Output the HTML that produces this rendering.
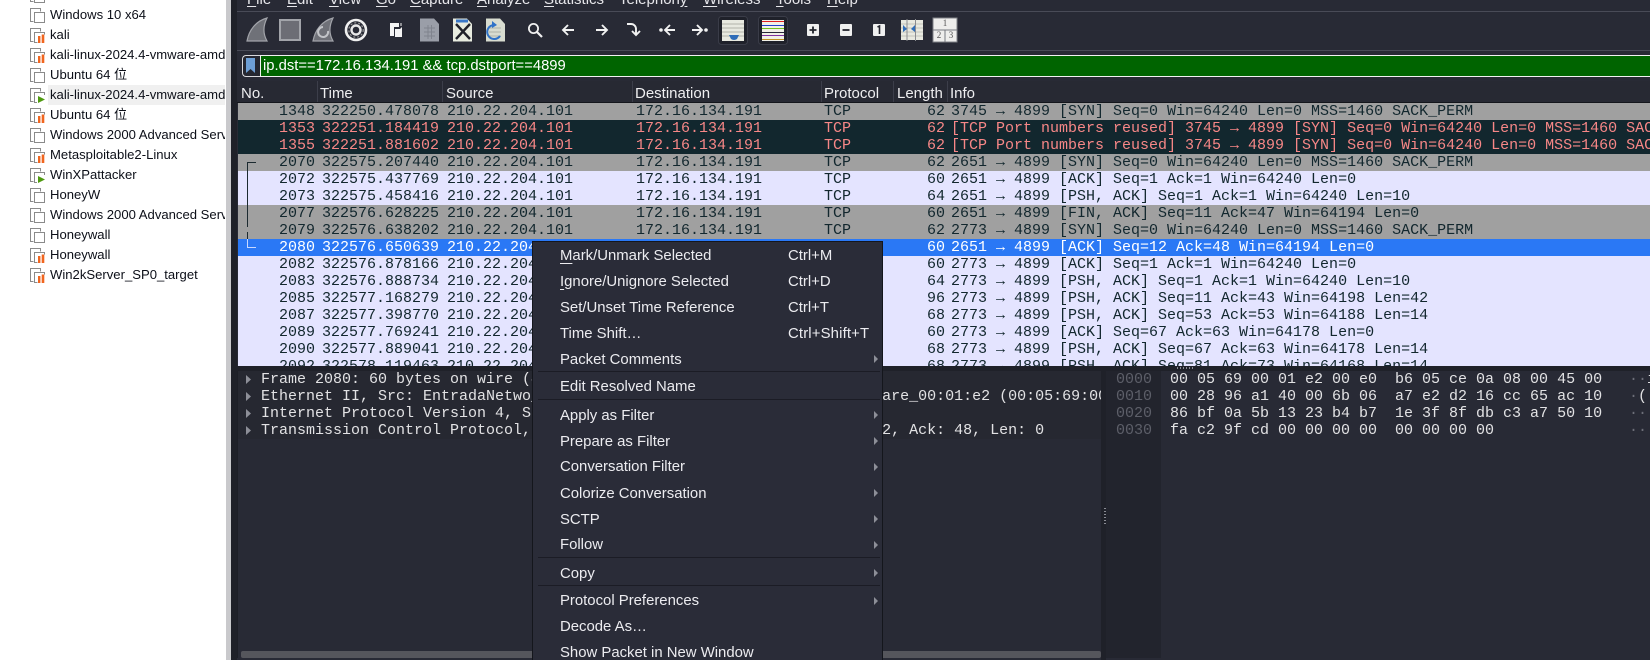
<!DOCTYPE html>
<html><head><meta charset="utf-8"><style>
html,body{margin:0;padding:0;width:1650px;height:660px;overflow:hidden;background:#fff}
*{box-sizing:border-box}
#root{position:absolute;left:0;top:0;width:1650px;height:660px;overflow:hidden}
#side{position:absolute;left:0;top:0;width:226px;height:660px;background:#fff;font:13.1px/20px "Liberation Sans","Noto Sans CJK SC",sans-serif;color:#0c0f18;overflow:hidden}
#side .s{position:absolute;left:50px;height:20px;white-space:nowrap;width:175px;overflow:hidden}
#side svg{position:absolute;left:30px;width:15px;height:15px}
#win{position:absolute;left:231px;top:0;width:1419px;height:660px;background:#282a35;overflow:hidden}
#edge{position:absolute;left:226px;top:0;width:5px;height:660px;background:#c9c9cc}
.m{position:absolute;top:-10px;font:15px/20px "Liberation Sans",sans-serif;color:#e6e6ea;white-space:nowrap}
.m u{text-underline-offset:2px}
.abs{position:absolute}
#filter{position:absolute;left:29px;top:55px;width:1400px;height:22px;background:#006400;border:1px solid #f2f2f2;border-right:0;font:14.8px/20px "Liberation Sans",sans-serif;color:#fff;padding-left:2px;white-space:nowrap}
#hdr{position:absolute;left:6px;top:81px;width:1413px;height:22px;background:#272933;border-bottom:1px solid #14161c}
#hdr span{position:absolute;top:2px;font:15px/22px "Liberation Sans",sans-serif;color:#eeeef0;white-space:nowrap}
#hdr i{position:absolute;top:0;width:1px;height:21px;background:#3c3e4a}
#list{position:absolute;left:7px;top:103px;width:1412px;height:263px;overflow:hidden;font:15px/17px "Liberation Mono",monospace;color:#12272e}
.r{position:absolute;left:0;width:1412px;height:17px;white-space:nowrap}
.r b{font-weight:400;position:absolute;top:0}
.n{left:0;width:77px;text-align:right}.t{left:84px}.so{left:209px}.d{left:398px}.p{left:586px}
.l{left:659px;width:48px;text-align:right}.i{left:713px}
.g{background:#a0a0a0}.x{background:#12272e;color:#f78787}.w{background:#e4e4ff}.sel{background:#2a78f5;color:#fff}
#det{position:absolute;left:6px;top:371px;width:864px;height:287px;background:#282a35;overflow:hidden;font:15px/17px "Liberation Mono",monospace;color:#e2e2e4;border-left:1px solid #1d1f27}
#det .ln{position:absolute;left:23px;white-space:nowrap}
#det svg{position:absolute;left:8px;width:6px;height:9px}
#hex{position:absolute;left:875px;top:371px;width:544px;height:287px;background:#282a35;font:15px/17px "Liberation Mono",monospace;color:#e2e2e4;overflow:hidden}
#hex .o{position:absolute;left:0;top:0;width:55px;height:287px;background:#22242d}
#hex .ln{position:absolute;white-space:pre}
#ctx{position:absolute;left:532px;top:241px;width:351px;height:430px;background:#2a2c38;border:1px solid #14161c;font:14.9px/26px "Liberation Sans",sans-serif;color:#ececf0}
#ctx .it{position:absolute;left:27px;white-space:nowrap;height:26px}
#ctx .sc{position:absolute;left:255px;white-space:nowrap;height:26px}
#ctx .sp{position:absolute;left:5px;width:342px;height:1px;background:#1b1c25}
#ctx .ar{position:absolute;left:341px;width:0;height:0;border-left:4px solid #8d8f98;border-top:4px solid transparent;border-bottom:4px solid transparent}
#ctx u{text-underline-offset:3px}
</style></head><body><div id="root">
<svg width="0" height="0" style="position:absolute"><defs>
<symbol id="vm" viewBox="0 0 15 15"><path d="M3.5 13.5H.5V3.5M.5 3.5V.5H10.5V3.5" fill="none" stroke="#8a8a8a"/><rect x="4.5" y="4.5" width="10" height="10" fill="#fff" stroke="#8a8a8a"/></symbol>
<symbol id="vo" viewBox="0 0 15 15"><path d="M3.5 13.5H.5V.5H10.5V3.5" fill="none" stroke="#8a8a8a"/><path d="M7.5 14.5H4.5V4.5H14.5V6.5" fill="none" stroke="#8a8a8a"/><rect x="8" y="8" width="2.4" height="7" fill="#f0651f"/><rect x="11.7" y="6.5" width="2.6" height="8.5" fill="#f0651f"/></symbol>
<symbol id="vp" viewBox="0 0 15 15"><path d="M3.5 13.5H.5V.5H10.5V3.5" fill="none" stroke="#8a8a8a"/><path d="M7 14.5H4.5V4.5H14.5V7" fill="none" stroke="#8a8a8a"/><path d="M8 8L15 11.5L8 15Z" fill="#4f9a10"/></symbol>
</defs></svg>

<div id="side">
<div class="abs" style="left:48px;top:85px;width:177px;height:20px;background:#f0f0f0"></div>
<svg style="top:-12px"><use href="#vm"/></svg>
<svg style="top:8px"><use href="#vm"/></svg><div class="s" style="top:5px">Windows 10 x64</div>
<svg style="top:28px"><use href="#vo"/></svg><div class="s" style="top:25px">kali</div>
<svg style="top:48px"><use href="#vo"/></svg><div class="s" style="top:45px">kali-linux-2024.4-vmware-amd64</div>
<svg style="top:68px"><use href="#vm"/></svg><div class="s" style="top:65px">Ubuntu 64 位</div>
<svg style="top:88px"><use href="#vp"/></svg><div class="s" style="top:85px">kali-linux-2024.4-vmware-amd64</div>
<svg style="top:108px"><use href="#vo"/></svg><div class="s" style="top:105px">Ubuntu 64 位</div>
<svg style="top:128px"><use href="#vm"/></svg><div class="s" style="top:125px">Windows 2000 Advanced Server</div>
<svg style="top:148px"><use href="#vo"/></svg><div class="s" style="top:145px">Metasploitable2-Linux</div>
<svg style="top:168px"><use href="#vp"/></svg><div class="s" style="top:165px">WinXPattacker</div>
<svg style="top:188px"><use href="#vm"/></svg><div class="s" style="top:185px">HoneyW</div>
<svg style="top:208px"><use href="#vm"/></svg><div class="s" style="top:205px">Windows 2000 Advanced Server</div>
<svg style="top:228px"><use href="#vm"/></svg><div class="s" style="top:225px">Honeywall</div>
<svg style="top:248px"><use href="#vo"/></svg><div class="s" style="top:245px">Honeywall</div>
<svg style="top:268px"><use href="#vo"/></svg><div class="s" style="top:265px">Win2kServer_SP0_target</div>
</div>
<div id="edge"></div>

<div id="win">
<div class="abs" style="left:0;top:0;width:6px;height:660px;background:#1f2129"></div>
<div class="m" style="left:16px"><u>F</u>ile</div>
<div class="m" style="left:56px"><u>E</u>dit</div>
<div class="m" style="left:98px"><u>V</u>iew</div>
<div class="m" style="left:145px"><u>G</u>o</div>
<div class="m" style="left:179px"><u>C</u>apture</div>
<div class="m" style="left:246px"><u>A</u>nalyze</div>
<div class="m" style="left:313px"><u>S</u>tatistics</div>
<div class="m" style="left:388px">Telephon<u>y</u></div>
<div class="m" style="left:472px"><u>W</u>ireless</div>
<div class="m" style="left:545px"><u>T</u>ools</div>
<div class="m" style="left:596px"><u>H</u>elp</div>
<div class="abs" style="left:6px;top:11px;width:1413px;height:1px;background:#494b57"></div>
<div class="abs" style="left:6px;top:50px;width:1413px;height:1px;background:#494b57"></div>

<svg class="abs" style="left:0;top:0" width="760" height="50" viewBox="231 0 760 50">
<path d="M247 41C249 30 256 21 267 18C263 26 263 34 267 41Z" fill="#6f7178" stroke="#a2a4aa" stroke-width="1.2"/>
<rect x="280" y="20" width="20" height="20" fill="#6c6d75" stroke="#a2a4aa" stroke-width="2"/>
<path d="M313 41C315 30 322 21 333 18C329 26 329 34 333 41Z" fill="#6f7178" stroke="#a2a4aa" stroke-width="1.2"/>
<path d="M328 31A5 5 0 1 1 323 27" fill="none" stroke="#c2c4c8" stroke-width="2"/>
<circle cx="356" cy="30" r="10" fill="none" stroke="#f0f0f0" stroke-width="2.6"/><circle cx="356" cy="30" r="4.5" fill="none" stroke="#e8e8e8" stroke-width="2.4"/>
<circle cx="356" cy="30" r="7.2" fill="none" stroke="#999" stroke-width="1.2" stroke-dasharray="2 2"/>
<path d="M390 23H399V27H394V36H390Z" fill="#f4f4f4"/><path d="M395 29H400L402 27V37H395Z" fill="#f4f4f4"/><path d="M401 23V26" stroke="#f4f4f4"/>
<path d="M420 18.5H434L439 24V41.5H420Z" fill="#9a9ea8"/><path d="M424 28H435M424 32H435M424 36H435M428 25V39M431.5 25V39" stroke="#80848e" stroke-width="1"/>
<path d="M453 18.5H467L472 24V41.5H453Z" fill="#e8ece0"/><path d="M456 21H468" stroke="#3a78c8" stroke-width="3"/><path d="M456 24L470 39M470 24L456 39" stroke="#20222a" stroke-width="2.4"/>
<path d="M486 18.5H500L505 24V41.5H486Z" fill="#d8dcd0"/><path d="M489 28H501M489 32H501M489 36H501" stroke="#aeb2a8"/><path d="M500 36A7 7 0 1 1 494 25" fill="none" stroke="#2f72c8" stroke-width="2"/><path d="M492 21L497 25L492 28Z" fill="#2f72c8"/>
<circle cx="533.5" cy="28.5" r="4.6" fill="none" stroke="#f0f0f0" stroke-width="1.8"/><path d="M537 32L542 37" stroke="#f0f0f0" stroke-width="2.2"/>
<path d="M574 30H563M568 25L563 30L568 35" fill="none" stroke="#f2f2f2" stroke-width="1.9"/>
<path d="M596 30H607M602 25L607 30L602 35" fill="none" stroke="#f2f2f2" stroke-width="1.9"/>
<path d="M627 24H631A5 5 0 0 1 636 29V35M632 31L636 35L640 31" fill="none" stroke="#f2f2f2" stroke-width="1.9"/>
<circle cx="661" cy="30" r="1.8" fill="#f2f2f2"/><path d="M675 30H665M670 25L665 30L670 35" fill="none" stroke="#f2f2f2" stroke-width="1.9"/>
<circle cx="706" cy="30" r="1.8" fill="#f2f2f2"/><path d="M692 30H702M697 25L702 30L697 35" fill="none" stroke="#f2f2f2" stroke-width="1.9"/>
<rect x="718.5" y="16.5" width="29" height="28" rx="3" fill="#1f212a" stroke="#3a3c48"/>
<rect x="722" y="20" width="22" height="21" fill="#e8e9e0"/><path d="M722 24H744M722 28H744M722 32H744M722 36H744" stroke="#b2b4aa"/><path d="M729 35H739L737 39Q734 41 731 39Z" fill="#2f6db8"/>
<rect x="758.5" y="16.5" width="29" height="28" rx="3" fill="#1f212a" stroke="#3a3c48"/>
<rect x="762" y="20" width="22" height="21" fill="#f0f0e8"/><path d="M762 21.5H784" stroke="#e02020"/><path d="M762 25.5H784" stroke="#2040d0"/><path d="M762 28.5H784" stroke="#70c020"/><path d="M762 32.5H784" stroke="#28283a"/><path d="M762 35.5H784" stroke="#8030a0"/><path d="M762 39.5H784" stroke="#c09020"/>
<rect x="807" y="24" width="12" height="12" rx="1" fill="#f0f0f0"/><path d="M809.5 30H816.5M813 26.5V33.5" stroke="#22242c" stroke-width="1.8"/>
<rect x="840" y="24" width="12" height="12" rx="1" fill="#f0f0f0"/><path d="M842.5 30H849.5" stroke="#22242c" stroke-width="1.8"/>
<rect x="873" y="24" width="12" height="12" rx="1" fill="#f0f0f0"/><path d="M877.5 27L879.5 26V34" fill="none" stroke="#22242c" stroke-width="1.6"/>
<rect x="901" y="20" width="22" height="20" fill="#e8e9e0"/><path d="M901 24H923M901 28H923M901 32H923M901 36H923" stroke="#c2c4ba"/><path d="M907 19V41M915.5 19V41" stroke="#8a8c90"/><path d="M903 26L907 30L903 33ZM911 30L915 26V33Z" fill="#2f6db8" transform="translate(0 -1)"/>
<rect x="933" y="18" width="24" height="24" fill="#eeeeec" stroke="#808288"/><path d="M933 30H957M945 30V42" stroke="#77797f"/>
</svg>
<div class="abs" style="left:708px;top:16px;font:9px/14px 'Liberation Serif',serif;color:#555;width:12px;text-align:center">1</div>
<div class="abs" style="left:702px;top:28px;font:9px/14px 'Liberation Serif',serif;color:#555;width:12px;text-align:center">2</div>
<div class="abs" style="left:714px;top:28px;font:9px/14px 'Liberation Serif',serif;color:#555;width:12px;text-align:center">3</div>

<div class="abs" style="left:11px;top:55px;width:20px;height:22px;border:1px solid #d8d8dc;border-right:0;border-radius:4px 0 0 4px;background:#252731"></div>
<svg class="abs" style="left:15px;top:58px" width="9" height="15" viewBox="0 0 9 15"><path d="M0 0H9V15L4.5 11L0 15Z" fill="#6d9fd6"/></svg>
<div id="filter">ip.dst==172.16.134.191 &amp;&amp; tcp.dstport==4899</div>

<div id="hdr">
<span style="left:4px">No.</span><i style="left:80px"></i>
<span style="left:83px">Time</span><i style="left:205px"></i>
<span style="left:209px">Source</span><i style="left:395px"></i>
<span style="left:398px">Destination</span><i style="left:584px"></i>
<span style="left:587px">Protocol</span><i style="left:656px"></i>
<span style="left:660px">Length</span><i style="left:710px"></i>
<span style="left:713px">Info</span>
</div>

<div id="list">
<div class="r g" style="top:0"><b class="n">1348</b><b class="t">322250.478078</b><b class="so">210.22.204.101</b><b class="d">172.16.134.191</b><b class="p">TCP</b><b class="l">62</b><b class="i">3745 → 4899 [SYN] Seq=0 Win=64240 Len=0 MSS=1460 SACK_PERM</b></div>
<div class="r x" style="top:17px"><b class="n">1353</b><b class="t">322251.184419</b><b class="so">210.22.204.101</b><b class="d">172.16.134.191</b><b class="p">TCP</b><b class="l">62</b><b class="i">[TCP Port numbers reused] 3745 → 4899 [SYN] Seq=0 Win=64240 Len=0 MSS=1460 SACK_PERM</b></div>
<div class="r x" style="top:34px"><b class="n">1355</b><b class="t">322251.881602</b><b class="so">210.22.204.101</b><b class="d">172.16.134.191</b><b class="p">TCP</b><b class="l">62</b><b class="i">[TCP Port numbers reused] 3745 → 4899 [SYN] Seq=0 Win=64240 Len=0 MSS=1460 SACK_PERM</b></div>
<div class="r g" style="top:51px"><b class="n">2070</b><b class="t">322575.207440</b><b class="so">210.22.204.101</b><b class="d">172.16.134.191</b><b class="p">TCP</b><b class="l">62</b><b class="i">2651 → 4899 [SYN] Seq=0 Win=64240 Len=0 MSS=1460 SACK_PERM</b></div>
<div class="r w" style="top:68px"><b class="n">2072</b><b class="t">322575.437769</b><b class="so">210.22.204.101</b><b class="d">172.16.134.191</b><b class="p">TCP</b><b class="l">60</b><b class="i">2651 → 4899 [ACK] Seq=1 Ack=1 Win=64240 Len=0</b></div>
<div class="r w" style="top:85px"><b class="n">2073</b><b class="t">322575.458416</b><b class="so">210.22.204.101</b><b class="d">172.16.134.191</b><b class="p">TCP</b><b class="l">64</b><b class="i">2651 → 4899 [PSH, ACK] Seq=1 Ack=1 Win=64240 Len=10</b></div>
<div class="r g" style="top:102px"><b class="n">2077</b><b class="t">322576.628225</b><b class="so">210.22.204.101</b><b class="d">172.16.134.191</b><b class="p">TCP</b><b class="l">60</b><b class="i">2651 → 4899 [FIN, ACK] Seq=11 Ack=47 Win=64194 Len=0</b></div>
<div class="r g" style="top:119px"><b class="n">2079</b><b class="t">322576.638202</b><b class="so">210.22.204.101</b><b class="d">172.16.134.191</b><b class="p">TCP</b><b class="l">62</b><b class="i">2773 → 4899 [SYN] Seq=0 Win=64240 Len=0 MSS=1460 SACK_PERM</b></div>
<div class="r sel" style="top:136px"><b class="n">2080</b><b class="t">322576.650639</b><b class="so">210.22.204.101</b><b class="d">172.16.134.191</b><b class="p">TCP</b><b class="l">60</b><b class="i">2651 → 4899 [ACK] Seq=12 Ack=48 Win=64194 Len=0</b></div>
<div class="r w" style="top:153px"><b class="n">2082</b><b class="t">322576.878166</b><b class="so">210.22.204.101</b><b class="d">172.16.134.191</b><b class="p">TCP</b><b class="l">60</b><b class="i">2773 → 4899 [ACK] Seq=1 Ack=1 Win=64240 Len=0</b></div>
<div class="r w" style="top:170px"><b class="n">2083</b><b class="t">322576.888734</b><b class="so">210.22.204.101</b><b class="d">172.16.134.191</b><b class="p">TCP</b><b class="l">64</b><b class="i">2773 → 4899 [PSH, ACK] Seq=1 Ack=1 Win=64240 Len=10</b></div>
<div class="r w" style="top:187px"><b class="n">2085</b><b class="t">322577.168279</b><b class="so">210.22.204.101</b><b class="d">172.16.134.191</b><b class="p">TCP</b><b class="l">96</b><b class="i">2773 → 4899 [PSH, ACK] Seq=11 Ack=43 Win=64198 Len=42</b></div>
<div class="r w" style="top:204px"><b class="n">2087</b><b class="t">322577.398770</b><b class="so">210.22.204.101</b><b class="d">172.16.134.191</b><b class="p">TCP</b><b class="l">68</b><b class="i">2773 → 4899 [PSH, ACK] Seq=53 Ack=53 Win=64188 Len=14</b></div>
<div class="r w" style="top:221px"><b class="n">2089</b><b class="t">322577.769241</b><b class="so">210.22.204.101</b><b class="d">172.16.134.191</b><b class="p">TCP</b><b class="l">60</b><b class="i">2773 → 4899 [ACK] Seq=67 Ack=63 Win=64178 Len=0</b></div>
<div class="r w" style="top:238px"><b class="n">2090</b><b class="t">322577.889041</b><b class="so">210.22.204.101</b><b class="d">172.16.134.191</b><b class="p">TCP</b><b class="l">68</b><b class="i">2773 → 4899 [PSH, ACK] Seq=67 Ack=63 Win=64178 Len=14</b></div>
<div class="r w" style="top:255px"><b class="n">2092</b><b class="t">322578.119463</b><b class="so">210.22.204.101</b><b class="d">172.16.134.191</b><b class="p">TCP</b><b class="l">68</b><b class="i">2773 → 4899 [PSH, ACK] Seq=81 Ack=73 Win=64168 Len=14</b></div>
<svg class="abs" style="left:0;top:0" width="30" height="160"><path d="M18 59.5H9.5V136" fill="none" stroke="#1c2a30" stroke-dasharray="none"/><path d="M9.5 136V144.5H18" fill="none" stroke="#c8d8ff"/><path d="M9.5 124V129" stroke="#a0a0a0"/></svg>
</div>

<div class="abs" style="left:6px;top:366px;width:1413px;height:5px;background:#1f2129"></div>

<div id="det">
<div class="abs" style="left:0;top:0;width:864px;height:68px;background:#262831"></div>
<svg style="top:4px"><path d="M0 0L5 4.5L0 9Z" fill="#8d8f98"/></svg><div class="ln" style="top:0">Frame 2080: 60 bytes on wire (480 bits), 60 bytes captured (480 bits)</div>
<svg style="top:21px"><path d="M0 0L5 4.5L0 9Z" fill="#8d8f98"/></svg><div class="ln" style="top:17px">Ethernet II, Src: EntradaNetwo_05:ce:0a (00:e0:b6:05:ce:0a), Dst: VMware_00:01:e2 (00:05:69:00:01:e2)</div>
<svg style="top:38px"><path d="M0 0L5 4.5L0 9Z" fill="#8d8f98"/></svg><div class="ln" style="top:34px">Internet Protocol Version 4, Src: 210.22.204.101, Dst: 172.16.134.191</div>
<svg style="top:55px"><path d="M0 0L5 4.5L0 9Z" fill="#8d8f98"/></svg><div class="ln" style="top:51px">Transmission Control Protocol, Src Port: 2651, Dst Port: 4899, Seq: 12, Ack: 48, Len: 0</div>
<div class="abs" style="left:3px;top:280px;width:860px;height:7px;background:#55565c;border-radius:2px"></div>
</div>
<div class="abs" style="left:870px;top:371px;width:5px;height:289px;background:#1f2129"></div>
<div class="abs" style="left:873px;top:508px;width:2px;height:18px;background:repeating-linear-gradient(#8a8c94 0 1px,transparent 1px 3px)"></div>
<div class="abs" style="left:946px;top:367px;width:18px;height:2px;background:repeating-linear-gradient(90deg,#8a8c94 0 1px,transparent 1px 3px)"></div>

<div id="hex">
<div class="o"></div>
<div class="ln" style="left:10px;top:0;color:#5d5f69">0000</div>
<div class="ln" style="left:10px;top:17px;color:#5d5f69">0010</div>
<div class="ln" style="left:10px;top:34px;color:#5d5f69">0020</div>
<div class="ln" style="left:10px;top:51px;color:#5d5f69">0030</div>
<div class="ln" style="left:64px;top:0">00 05 69 00 01 e2 00 e0  b6 05 ce 0a 08 00 45 00</div>
<div class="ln" style="left:64px;top:17px">00 28 96 a1 40 00 6b 06  a7 e2 d2 16 cc 65 ac 10</div>
<div class="ln" style="left:64px;top:34px">86 bf 0a 5b 13 23 b4 b7  1e 3f 8f db c3 a7 50 10</div>
<div class="ln" style="left:64px;top:51px">fa c2 9f cd 00 00 00 00  00 00 00 00</div>
<div class="ln" style="left:523px;top:0"><span style="color:#6d6f79">··</span>i</div>
<div class="ln" style="left:523px;top:17px"><span style="color:#6d6f79">·</span>(</div>
<div class="ln" style="left:523px;top:34px;color:#6d6f79">··</div>
<div class="ln" style="left:523px;top:51px;color:#6d6f79">··</div>
</div>
</div>

<div id="ctx">
<div class="it" style="top:1px"><u>M</u>ark/Unmark Selected</div><div class="sc" style="top:1px">Ctrl+M</div>
<div class="it" style="top:27px"><u>I</u>gnore/Unignore Selected</div><div class="sc" style="top:27px">Ctrl+D</div>
<div class="it" style="top:53px">Set/Unset Time Reference</div><div class="sc" style="top:53px">Ctrl+T</div>
<div class="it" style="top:79px">Time Shift…</div><div class="sc" style="top:79px;letter-spacing:.15px">Ctrl+Shift+T</div>
<div class="it" style="top:105px">Packet Comments</div><div class="ar" style="top:113px"></div>
<div class="sp" style="top:129px"></div>
<div class="it" style="top:132px">Edit Resolved Name</div>
<div class="sp" style="top:157px"></div>
<div class="it" style="top:161px">Apply as Filter</div><div class="ar" style="top:169px"></div>
<div class="it" style="top:187px">Prepare as Filter</div><div class="ar" style="top:195px"></div>
<div class="it" style="top:212px">Conversation Filter</div><div class="ar" style="top:221px"></div>
<div class="it" style="top:239px">Colorize Conversation</div><div class="ar" style="top:247px"></div>
<div class="it" style="top:265px">SCTP</div><div class="ar" style="top:273px"></div>
<div class="it" style="top:290px">Follow</div><div class="ar" style="top:299px"></div>
<div class="sp" style="top:315px"></div>
<div class="it" style="top:319px">Copy</div><div class="ar" style="top:327px"></div>
<div class="sp" style="top:343px"></div>
<div class="it" style="top:346px">Protocol Preferences</div><div class="ar" style="top:355px"></div>
<div class="it" style="top:372px">Decode As…</div>
<div class="it" style="top:398px">Show Packet in New Window</div>
</div>
</div></body></html>
